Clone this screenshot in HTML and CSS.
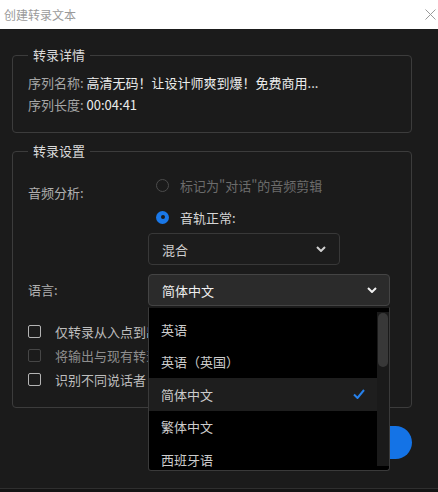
FILE: index.html
```html
<!DOCTYPE html>
<html lang="zh-CN">
<head>
    <meta charset="UTF-8">
    <meta name="viewport" content="width=device-width, initial-scale=1.0">
    <title>创建转录文本</title>
    <link rel="stylesheet" href="styles.css">
</head>
<body>
    <div class="dialog">
        <div class="titlebar">
            <span class="title">创建转录文本</span>
            <svg class="close" viewBox="0 0 11 11" width="11" height="11">
                <path d="M0.5 0.5 L10.5 10.5 M10.5 0.5 L0.5 10.5" stroke="#9a9a9a" stroke-width="1" fill="none"/>
            </svg>
        </div>

        <div class="content">
            <fieldset class="group info">
                <legend>转录详情</legend>
                <div class="info-row"><span class="label">序列名称:</span> <span class="value">高清无码！让设计师爽到爆！免费商用...</span></div>
                <div class="info-row"><span class="label">序列长度:</span> <span class="value">00:04:41</span></div>
            </fieldset>

            <fieldset class="group settings">
                <legend>转录设置</legend>
                <div class="settings-grid">
                    <div class="field-label audio-label">音频分析:</div>
                    <div class="audio-options">
                        <div class="radio-row disabled">
                            <span class="radio"></span>
                            <span>标记为"对话"的音频剪辑</span>
                        </div>
                        <div class="radio-row">
                            <span class="radio checked"></span>
                            <span>音轨正常:</span>
                        </div>
                        <div class="select mix-select">
                            <span>混合</span>
                            <svg class="chevron" viewBox="0 0 10 6" width="10" height="6">
                                <polyline points="1,1 5,5 9,1" fill="none" stroke="#cfcfcf" stroke-width="2"/>
                            </svg>
                        </div>
                    </div>

                    <div class="field-label lang-label">语言:</div>
                    <div class="lang-field">
                        <div class="select lang-select open">
                            <span>简体中文</span>
                            <svg class="chevron" viewBox="0 0 10 6" width="10" height="6">
                                <polyline points="1,1 5,5 9,1" fill="none" stroke="#f0f0f0" stroke-width="2"/>
                            </svg>
                        </div>
                        <div class="dropdown">
                            <ul class="options">
                                <li class="option">英语</li>
                                <li class="option">英语（英国）</li>
                                <li class="option selected">
                                    <span>简体中文</span>
                                    <svg class="check" viewBox="0 0 12 10" width="12" height="10">
                                        <polyline points="1,5.5 4.5,9 11,1" fill="none" stroke="#2680eb" stroke-width="2"/>
                                    </svg>
                                </li>
                                <li class="option">繁体中文</li>
                                <li class="option">西班牙语</li>
                            </ul>
                            <div class="scroll-track"><div class="scroll-thumb"></div></div>
                        </div>
                    </div>
                </div>

                <!-- labels are clipped where the open list covers them -->
                <div class="checks">
                    <label class="check-row"><span class="box"></span><span class="check-text">仅转录从入点到出点</span></label>
                    <label class="check-row disabled"><span class="box"></span><span class="check-text">将输出与现有转录合并</span></label>
                    <label class="check-row"><span class="box"></span><span class="check-text">识别不同说话者</span></label>
                </div>
            </fieldset>

            <div class="actions">
                <button class="primary">转录</button>
            </div>
        </div>

        <div class="footer"></div>
    </div>
</body>
</html>
```

FILE: styles.css
```css
* {
    box-sizing: border-box;
}
html, body {
    margin: 0;
    height: 100%;
}
body {
    font-family: "Noto Sans CJK SC", "Noto Sans", sans-serif;
    font-size: 13px;
    background: #1b1b1b;
    color: #cccccc;
    overflow: hidden;
}
.dialog {
    height: 492px;
    display: flex;
    flex-direction: column;
}

/* title bar */
.titlebar {
    height: 29px;
    flex: none;
    background: #ffffff;
    display: flex;
    align-items: center;
    justify-content: space-between;
    padding: 0 2px 0 4px;
    color: #9a9a9a;
    font-size: 12px;
}
.close {
    display: block;
    margin-top: -1px;
}

.content {
    padding: 16px 0 0 12px;
}

/* group boxes */
.group {
    width: 400px;
    margin: 0;
    padding: 7px 15px 16px;
    border: 1px solid #3c3c3c;
    border-radius: 4px;
    min-inline-size: 0;
}
.group legend {
    padding: 0 5px;
    margin: 0;
    line-height: 20px;
    font-size: 13px;
    color: #dadada;
}
.settings {
    margin-top: 8px;
    padding-top: 8px;
}

.info-row {
    line-height: 22px;
    white-space: nowrap;
}
.info-row .label {
    color: #a6a6a6;
}
.info-row .value {
    color: #ececec;
}

/* settings form */
.settings-grid {
    display: grid;
    grid-template-columns: 120px auto;
    row-gap: 9px;
}
.field-label {
    color: #b0b0b0;
    line-height: 22px;
}
.audio-label {
    padding-top: 13px;
}
.lang-label {
    align-self: center;
}

.radio-row {
    height: 32px;
    display: flex;
    align-items: center;
    gap: 11px;
    padding-left: 8px;
    color: #d6d6d6;
}
.radio-row.disabled {
    color: #6c6c6c;
}
.radio {
    width: 13px;
    height: 13px;
    border-radius: 50%;
    border: 1.5px solid #4c4c4c;
    display: flex;
    align-items: center;
    justify-content: center;
}
.radio.checked {
    border: none;
    background: #1a78e8;
}
.radio.checked::after {
    content: "";
    width: 4px;
    height: 4px;
    border-radius: 50%;
    background: #1b1b1b;
}

.select {
    height: 32px;
    display: flex;
    align-items: center;
    justify-content: space-between;
    padding: 0 13px 0 13px;
    border: 1px solid #383838;
    border-radius: 4px;
    color: #d0d0d0;
}
.mix-select {
    width: 192px;
    background: #1c1c1c;
}
.lang-select {
    width: 242px;
    background: #2b2b2b;
    border-color: #444444;
    color: #f0f0f0;
    padding-right: 12px;
}

/* open language list */
.lang-field {
    position: relative;
}
.dropdown {
    position: absolute;
    left: 0;
    top: calc(100% + 1px);
    width: 242px;
    height: 164px;
    background: #000000;
    border: 1px solid #3a3a3a;
    border-top-color: #1a1a1a;
    border-radius: 0 0 3px 3px;
    display: flex;
    overflow: hidden;
    z-index: 2;
}
.options {
    list-style: none;
    margin: 0;
    padding: 5px 0 0;
    flex: 1;
}
.option {
    height: 32.5px;
    display: flex;
    align-items: center;
    justify-content: space-between;
    padding: 0 12px;
    color: #cdcdcd;
}
.option.selected {
    background: #1e1e1e;
}
.scroll-track {
    width: 12px;
    margin: 4px 0 4px;
    background: #1a1a1a;
    padding: 1px;
}
.scroll-thumb {
    height: 54px;
    border-radius: 5px;
    background: #383838;
}

/* checkboxes */
.checks {
    margin-top: 13px;
}
.check-row {
    height: 24px;
    display: flex;
    align-items: center;
    gap: 14px;
    color: #bdbdbd;
    white-space: nowrap;
}
.check-text {
    max-width: 93px;
    overflow: hidden;
}
.check-row.disabled {
    color: #8e8e8e;
}
.box {
    width: 13px;
    height: 13px;
    border: 1.5px solid #b4b4b4;
    border-radius: 2px;
    flex: none;
}
.check-row.disabled .box {
    border-color: #464646;
}

/* bottom buttons */
.actions {
    width: 400px;
    margin-top: 18px;
    display: flex;
    justify-content: flex-end;
}
.primary {
    height: 33px;
    padding: 0 26px;
    border: none;
    border-radius: 17px;
    background: #1473e6;
    color: #ffffff;
    font-family: inherit;
    font-size: 13px;
}

.footer {
    margin-top: auto;
    height: 4px;
    flex: none;
    border-top: 1px solid #2f2f2f;
    background: #141414;
}
```
